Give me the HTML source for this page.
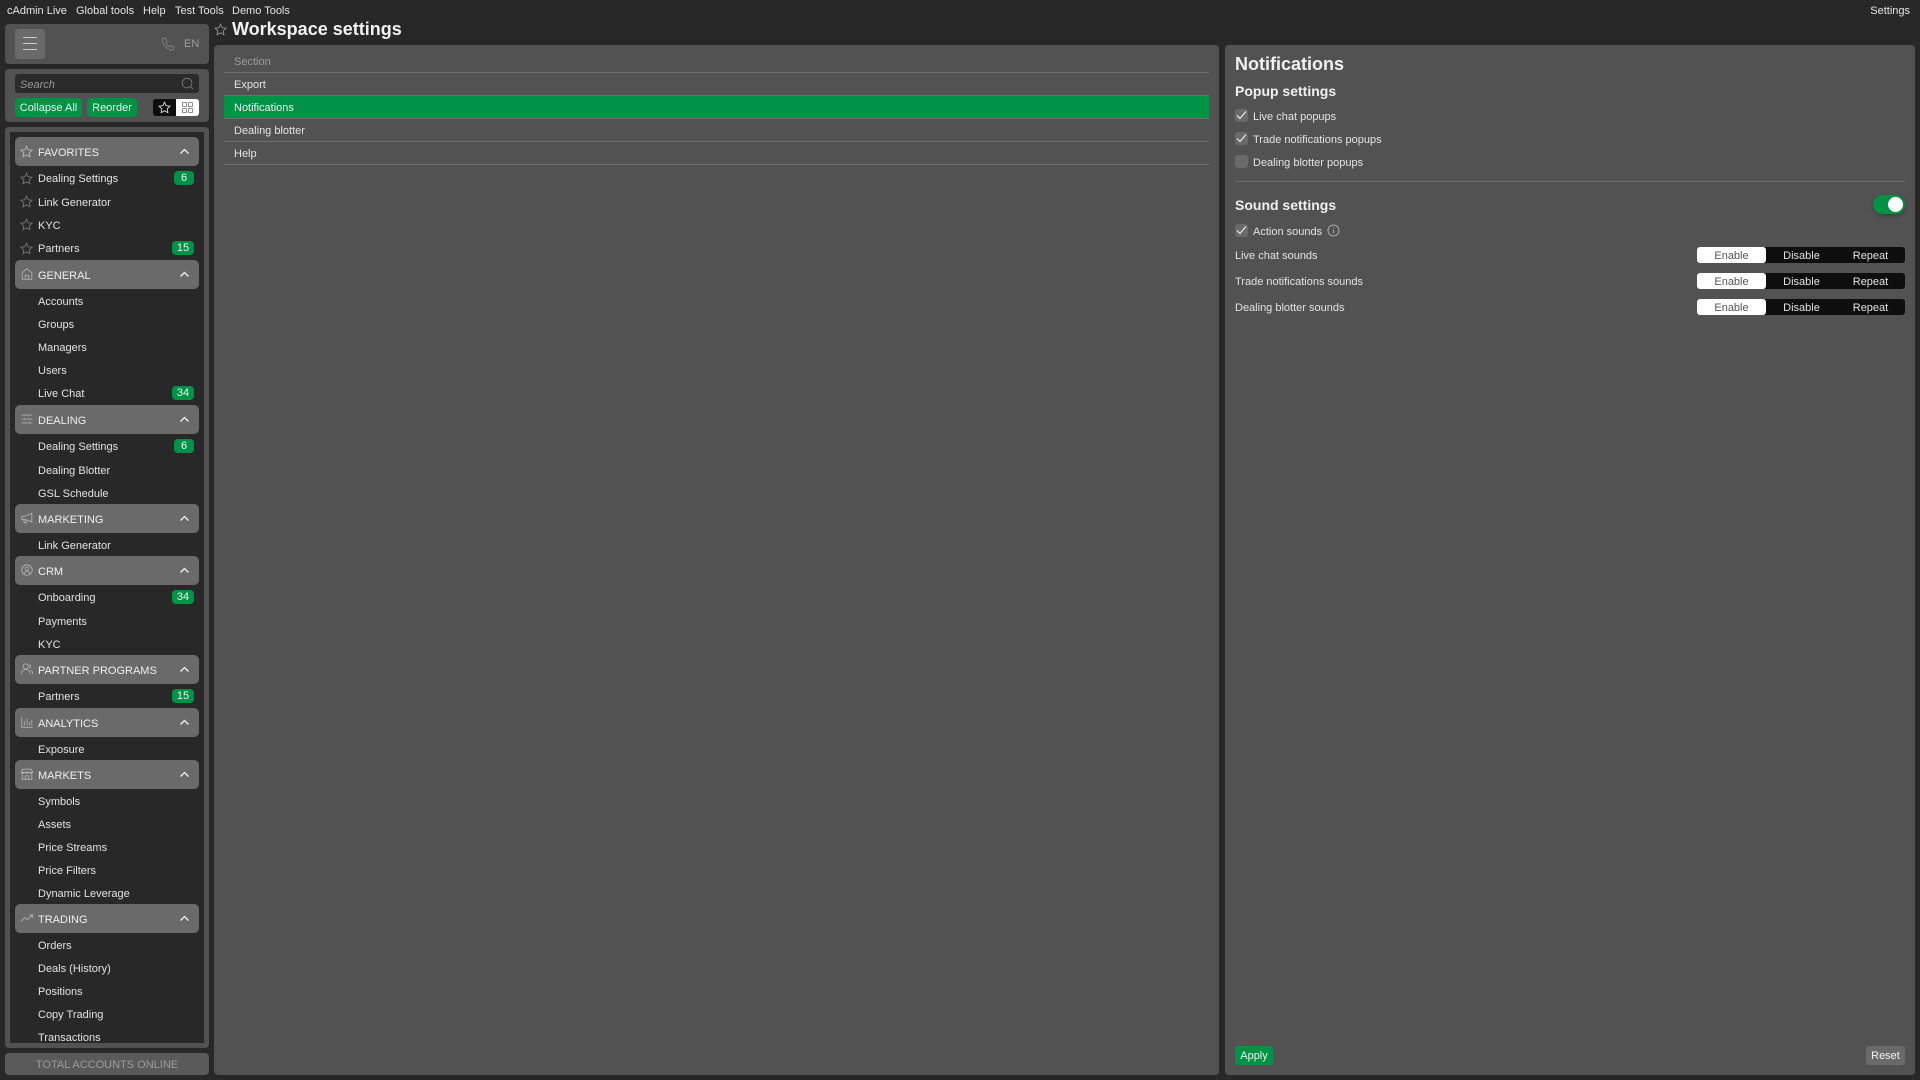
<!DOCTYPE html>
<html lang="en"><head><meta charset="utf-8"><title>Workspace settings</title>
<style>
html,body{margin:0;padding:0;background:#282828;width:1920px;height:1080px;overflow:hidden}
body{position:relative;font-family:"Liberation Sans",sans-serif;font-size:11px;color:#e3e3e3}
.a{position:absolute}
.t{position:absolute;white-space:nowrap;line-height:14px;height:14px;margin-top:1px}
.p{position:absolute;background:#525252;border-radius:4px}
.h{position:absolute;left:15px;width:184px;height:29px;background:#6a6a6a;border-radius:5px}
.h span{position:absolute;left:23px;top:9px;line-height:15px;white-space:nowrap;color:#f0f0f0}
.h svg.i{position:absolute;left:5px;top:7px;width:14px;height:14px;fill:none;stroke:#b2b2b2;stroke-width:1}
.h svg.c{position:absolute;left:164px;top:11px;width:11px;height:7px;fill:none;stroke:#f2f2f2;stroke-width:1.3}
.n{position:absolute;left:38px;line-height:14px;white-space:nowrap;color:#e3e3e3;margin-top:1px}
.b{position:absolute;right:16px;height:14px;line-height:15px;background:#009245;border-radius:4px;color:#f2f2f2;text-align:center}
.s{position:absolute;left:20px;width:13px;height:13px;fill:none;stroke:#707070;stroke-width:1}
.l{position:absolute;left:224px;width:985px;height:1px;background:#6e6e6e}
.cb{position:absolute;left:1235px;width:13px;height:13px;background:#6a6a6a;border-radius:3px}
.cb svg{position:absolute;left:1px;top:1px;width:11px;height:10px;fill:none;stroke:#f2f2f2;stroke-width:1.1}
.seg{position:absolute;left:1697px;width:208px;height:16px;background:#0e0e0e;border-radius:3px;color:#e3e3e3}
.seg b{position:absolute;left:0;top:0;width:69px;height:16px;background:#fff;border-radius:3px;color:#555;font-weight:400;text-align:center;line-height:18px}
.seg i{position:absolute;top:0;font-style:normal;width:69px;text-align:center;line-height:18px}
.btn{position:absolute;background:#009245;border-radius:3px;color:#f2f2f2;text-align:center}
</style></head><body>
<svg width="0" height="0" style="position:absolute"><defs>
<path id="star" d="M6.5 1.2 8.1 4.7 12 5.2 9.2 7.8 9.9 11.7 6.5 9.8 3.1 11.7 3.8 7.8 1 5.2 4.9 4.7Z"/>
</defs></svg>

<div class="t" style="left:7px;top:3px">cAdmin Live</div>
<div class="t" style="left:76px;top:3px">Global tools</div>
<div class="t" style="left:143px;top:3px">Help</div>
<div class="t" style="left:175px;top:3px">Test Tools</div>
<div class="t" style="left:232px;top:3px">Demo Tools</div>
<div class="t" style="right:10px;top:3px">Settings</div>

<div class="p" style="left:5px;top:24px;width:204px;height:40px"></div>
<div class="a" style="left:15px;top:29px;width:30px;height:30px;background:#6a6a6a;border-radius:3px"></div>
<div class="a" style="left:23px;top:37px;width:14px;height:1.4px;background:#ccc"></div>
<div class="a" style="left:23px;top:43px;width:14px;height:1.4px;background:#ccc"></div>
<div class="a" style="left:23px;top:49px;width:14px;height:1.4px;background:#ccc"></div>
<svg class="a" style="left:161px;top:37px;width:14px;height:14px;fill:none;stroke:#808080;stroke-width:1" viewBox="0 0 14 14"><path d="M2 1.500 4.200 1 6 4.300 4.700 5.600C5.500 7.500 7 9 8.800 9.800L10 8.500 13 10.300 12.500 12.500C12 13 10.500 13.300 8.500 12.500 5 11 2.800 8.500 1.500 5 1 3.500 1.300 2.200 2 1.500Z"/></svg>
<div class="t" style="left:184px;top:36px;color:#a0a0a0;font-size:11px">EN</div>

<div class="p" style="left:5px;top:69px;width:204px;height:53px"></div>
<div class="a" style="left:15px;top:74px;width:184px;height:19px;background:#2a2a2a;border-radius:3px"></div>
<div class="t" style="left:20px;top:77px;font-style:italic;color:#9a9a9a">Search</div>
<svg class="a" style="left:181px;top:77px;width:13px;height:13px;fill:none;stroke:#777;stroke-width:1" viewBox="0 0 14 14"><circle cx="6.500" cy="6.500" r="5.200"/><path d="M10.300 10.300 13 13"/></svg>
<div class="btn" style="left:15px;top:98px;width:67px;height:19px;border-radius:4px;line-height:21px">Collapse All</div>
<div class="btn" style="left:87px;top:98px;width:50px;height:19px;border-radius:4px;line-height:21px">Reorder</div>
<div class="a" style="left:153px;top:99px;width:23px;height:17px;background:#0e0e0e;border-radius:3px 0 0 3px"></div>
<div class="a" style="left:176px;top:99px;width:23px;height:17px;background:#fff;border-radius:0 3px 3px 0"></div>
<svg class="a" style="left:158px;top:101px;width:13px;height:13px;fill:none;stroke:#d8d8d8;stroke-width:.9" viewBox="0 0 13 13"><use href="#star"/></svg>
<svg class="a" style="left:181px;top:101px;width:13px;height:13px;fill:none;stroke:#8a8a8a;stroke-width:1" viewBox="0 0 13 13"><rect x="1.500" y="1.500" width="4" height="4" rx=".8"/><rect x="7.500" y="1.500" width="4" height="4" rx=".8"/><rect x="1.500" y="7.500" width="4" height="4" rx=".8"/><rect x="7.500" y="7.500" width="4" height="4" rx=".8"/></svg>

<div class="p" style="left:5px;top:127px;width:204px;height:921px"></div>
<div class="a" style="left:10px;top:132px;width:194px;height:911px;background:#282828;overflow:hidden"></div>

<div class="h" style="top:137px"><svg class="i" viewBox="0 0 13 13" style="width:13px;height:13px;left:5px;top:8px"><use href="#star"/></svg><span>FAVORITES</span><svg class="c" viewBox="0 0 11 7"><path d="M1.500 5.500 5.500 1.500 9.500 5.500"/></svg></div>
<svg class="s" style="top:172px" viewBox="0 0 13 13"><use href="#star"/></svg><div class="n" style="top:171px">Dealing Settings</div><div class="b" style="top:171px;left:174px;width:20px">6</div>
<svg class="s" style="top:195px" viewBox="0 0 13 13"><use href="#star"/></svg><div class="n" style="top:195px">Link Generator</div>
<svg class="s" style="top:218px" viewBox="0 0 13 13"><use href="#star"/></svg><div class="n" style="top:218px">KYC</div>
<svg class="s" style="top:242px" viewBox="0 0 13 13"><use href="#star"/></svg><div class="n" style="top:241px">Partners</div><div class="b" style="top:241px;left:172px;width:22px">15</div>

<div class="h" style="top:260px"><svg class="i" viewBox="0 0 16 16"><path d="M2.500 14V6.500L8 2l5.500 4.500V14ZM6 14V9.500h4V14"/></svg><span>GENERAL</span><svg class="c" viewBox="0 0 11 7"><path d="M1.500 5.500 5.500 1.500 9.500 5.500"/></svg></div>
<div class="n" style="top:294px">Accounts</div>
<div class="n" style="top:317px">Groups</div>
<div class="n" style="top:340px">Managers</div>
<div class="n" style="top:363px">Users</div>
<div class="n" style="top:386px">Live Chat</div><div class="b" style="top:386px;left:172px;width:22px">34</div>

<div class="h" style="top:405px"><svg class="i" viewBox="0 0 16 16"><path d="M2 3.500h6M10.500 3.500H14M9 2v3M2 8h2M6.500 8H14M5 6.500v3M2 12.500h7M11.500 12.500H14M10.500 11v3"/></svg><span>DEALING</span><svg class="c" viewBox="0 0 11 7"><path d="M1.500 5.500 5.500 1.500 9.500 5.500"/></svg></div>
<div class="n" style="top:439px">Dealing Settings</div><div class="b" style="top:439px;left:174px;width:20px">6</div>
<div class="n" style="top:463px">Dealing Blotter</div>
<div class="n" style="top:486px">GSL Schedule</div>

<div class="h" style="top:504px"><svg class="i" viewBox="0 0 16 16"><path d="M2 6v3.500h3.500L13.500 12.500V2.500L5.500 6ZM4 9.500l1 4h2.500l-1-3.200"/></svg><span>MARKETING</span><svg class="c" viewBox="0 0 11 7"><path d="M1.500 5.500 5.500 1.500 9.500 5.500"/></svg></div>
<div class="n" style="top:538px">Link Generator</div>

<div class="h" style="top:556px"><svg class="i" viewBox="0 0 16 16"><circle cx="8" cy="8" r="6"/><circle cx="8" cy="6.500" r="2"/><path d="M4.500 12.500c.6-2 2-2.700 3.500-2.700s2.900.7 3.500 2.700"/></svg><span>CRM</span><svg class="c" viewBox="0 0 11 7"><path d="M1.500 5.500 5.500 1.500 9.500 5.500"/></svg></div>
<div class="n" style="top:590px">Onboarding</div><div class="b" style="top:590px;left:172px;width:22px">34</div>
<div class="n" style="top:614px">Payments</div>
<div class="n" style="top:637px">KYC</div>

<div class="h" style="top:655px"><svg class="i" viewBox="0 0 16 16"><circle cx="6.500" cy="5" r="3"/><path d="M1.500 14c0-3.500 2-5.500 5-5.500s5 2 5 5.500M10.500 2.200c1.600.5 2.200 3.600 0 5.200M12.500 9c1.300 1 2 2.800 2 5"/></svg><span>PARTNER PROGRAMS</span><svg class="c" viewBox="0 0 11 7"><path d="M1.500 5.500 5.500 1.500 9.500 5.500"/></svg></div>
<div class="n" style="top:689px">Partners</div><div class="b" style="top:689px;left:172px;width:22px">15</div>

<div class="h" style="top:708px"><svg class="i" viewBox="0 0 16 16"><path d="M2 2v12h12.500M5 12V7M8 12V4M11 12V8M13.500 12V5.500"/></svg><span>ANALYTICS</span><svg class="c" viewBox="0 0 11 7"><path d="M1.500 5.500 5.500 1.500 9.500 5.500"/></svg></div>
<div class="n" style="top:742px">Exposure</div>

<div class="h" style="top:760px"><svg class="i" viewBox="0 0 16 16"><path d="M3 2.500h10l1.500 3.500h-13ZM2.500 6v8h11V6M6 14v-4h4v4M1.500 6c1 1.500 3 1.500 4.300 0 1 1.500 3.300 1.500 4.400 0 1.300 1.500 3.300 1.500 4.300 0"/></svg><span>MARKETS</span><svg class="c" viewBox="0 0 11 7"><path d="M1.500 5.500 5.500 1.500 9.500 5.500"/></svg></div>
<div class="n" style="top:794px">Symbols</div>
<div class="n" style="top:817px">Assets</div>
<div class="n" style="top:840px">Price Streams</div>
<div class="n" style="top:863px">Price Filters</div>
<div class="n" style="top:886px">Dynamic Leverage</div>

<div class="h" style="top:904px"><svg class="i" viewBox="0 0 16 16"><path d="M1 12 5.500 7.500 8.500 10 14.500 4.500M10.500 4.500h4V8"/></svg><span>TRADING</span><svg class="c" viewBox="0 0 11 7"><path d="M1.500 5.500 5.500 1.500 9.500 5.500"/></svg></div>
<div class="n" style="top:938px">Orders</div>
<div class="n" style="top:961px">Deals (History)</div>
<div class="n" style="top:984px">Positions</div>
<div class="n" style="top:1007px">Copy Trading</div>
<div class="a" style="left:38px;top:1028px;width:150px;height:15px;overflow:hidden"><div class="n" style="left:0;top:2px">Transactions</div></div>

<div class="p" style="left:5px;top:1053px;width:204px;height:22px;background:#5a5a5a"></div>
<div class="t" style="left:5px;width:204px;text-align:center;top:1057px;color:#9c9c9c">TOTAL ACCOUNTS ONLINE</div>

<svg class="a" style="left:214px;top:23px;width:13px;height:13px;fill:none;stroke:#8a8a8a;stroke-width:1" viewBox="0 0 13 13"><use href="#star"/></svg>
<div class="a" style="left:232px;top:18px;font-size:18px;font-weight:700;line-height:22px;color:#f2f2f2;white-space:nowrap">Workspace settings</div>

<div class="p" style="left:214px;top:45px;width:1005px;height:1030px"></div>
<div class="t" style="left:234px;top:54px;color:#9a9a9a">Section</div><div class="l" style="top:72px"></div>
<div class="t" style="left:234px;top:77px">Export</div><div class="l" style="top:95px"></div>
<div class="a" style="left:224px;top:96px;width:985px;height:22px;background:#009245"></div>
<div class="t" style="left:234px;top:100px;color:#f0f0f0">Notifications</div><div class="l" style="top:118px"></div>
<div class="t" style="left:234px;top:123px">Dealing blotter</div><div class="l" style="top:141px"></div>
<div class="t" style="left:234px;top:146px">Help</div><div class="l" style="top:164px"></div>

<div class="p" style="left:1225px;top:45px;width:690px;height:1030px"></div>
<div class="a" style="left:1235px;top:53px;font-size:18px;font-weight:700;line-height:22px;color:#f2f2f2">Notifications</div>
<div class="a" style="left:1235px;top:83px;font-size:14px;font-weight:700;line-height:16px;color:#f0f0f0">Popup settings</div>
<div class="cb" style="top:109px"><svg viewBox="0 0 11 10"><path d="M1 5.500 4 8.500 10 1.500"/></svg></div><div class="t" style="left:1253px;top:109px">Live chat popups</div>
<div class="cb" style="top:132px"><svg viewBox="0 0 11 10"><path d="M1 5.500 4 8.500 10 1.500"/></svg></div><div class="t" style="left:1253px;top:132px">Trade notifications popups</div>
<div class="cb" style="top:155px"></div><div class="t" style="left:1253px;top:155px">Dealing blotter popups</div>
<div class="a" style="left:1235px;top:181px;width:670px;height:1px;background:#6e6e6e"></div>
<div class="a" style="left:1235px;top:197px;font-size:14px;font-weight:700;line-height:16px;color:#f0f0f0">Sound settings</div>
<div class="a" style="left:1873px;top:195px;width:32px;height:19px;background:#009245;border-radius:10px;box-shadow:0 2px 4px rgba(0,0,0,.25)"></div>
<div class="a" style="left:1888px;top:197px;width:15px;height:15px;background:#fff;border-radius:50%"></div>
<div class="cb" style="top:224px"><svg viewBox="0 0 11 10"><path d="M1 5.500 4 8.500 10 1.500"/></svg></div><div class="t" style="left:1253px;top:224px">Action sounds</div>
<svg class="a" style="left:1327px;top:224px;width:13px;height:13px;fill:none;stroke:#a8a8a8;stroke-width:1" viewBox="0 0 13 13"><circle cx="6.500" cy="6.500" r="5.500"/><path d="M6.500 5.800v3.700M6.500 3.300v1"/></svg>
<div class="t" style="left:1235px;top:248px">Live chat sounds</div>
<div class="seg" style="top:247px"><b>Enable</b><i style="left:70px">Disable</i><i style="left:139px">Repeat</i></div>
<div class="t" style="left:1235px;top:274px">Trade notifications sounds</div>
<div class="seg" style="top:273px"><b>Enable</b><i style="left:70px">Disable</i><i style="left:139px">Repeat</i></div>
<div class="t" style="left:1235px;top:300px">Dealing blotter sounds</div>
<div class="seg" style="top:299px"><b>Enable</b><i style="left:70px">Disable</i><i style="left:139px">Repeat</i></div>
<div class="btn" style="left:1235px;top:1046px;width:38px;height:19px;line-height:21px">Apply</div>
<div class="btn" style="left:1866px;top:1046px;width:39px;height:19px;line-height:21px;background:#6a6a6a">Reset</div>
</body></html>
